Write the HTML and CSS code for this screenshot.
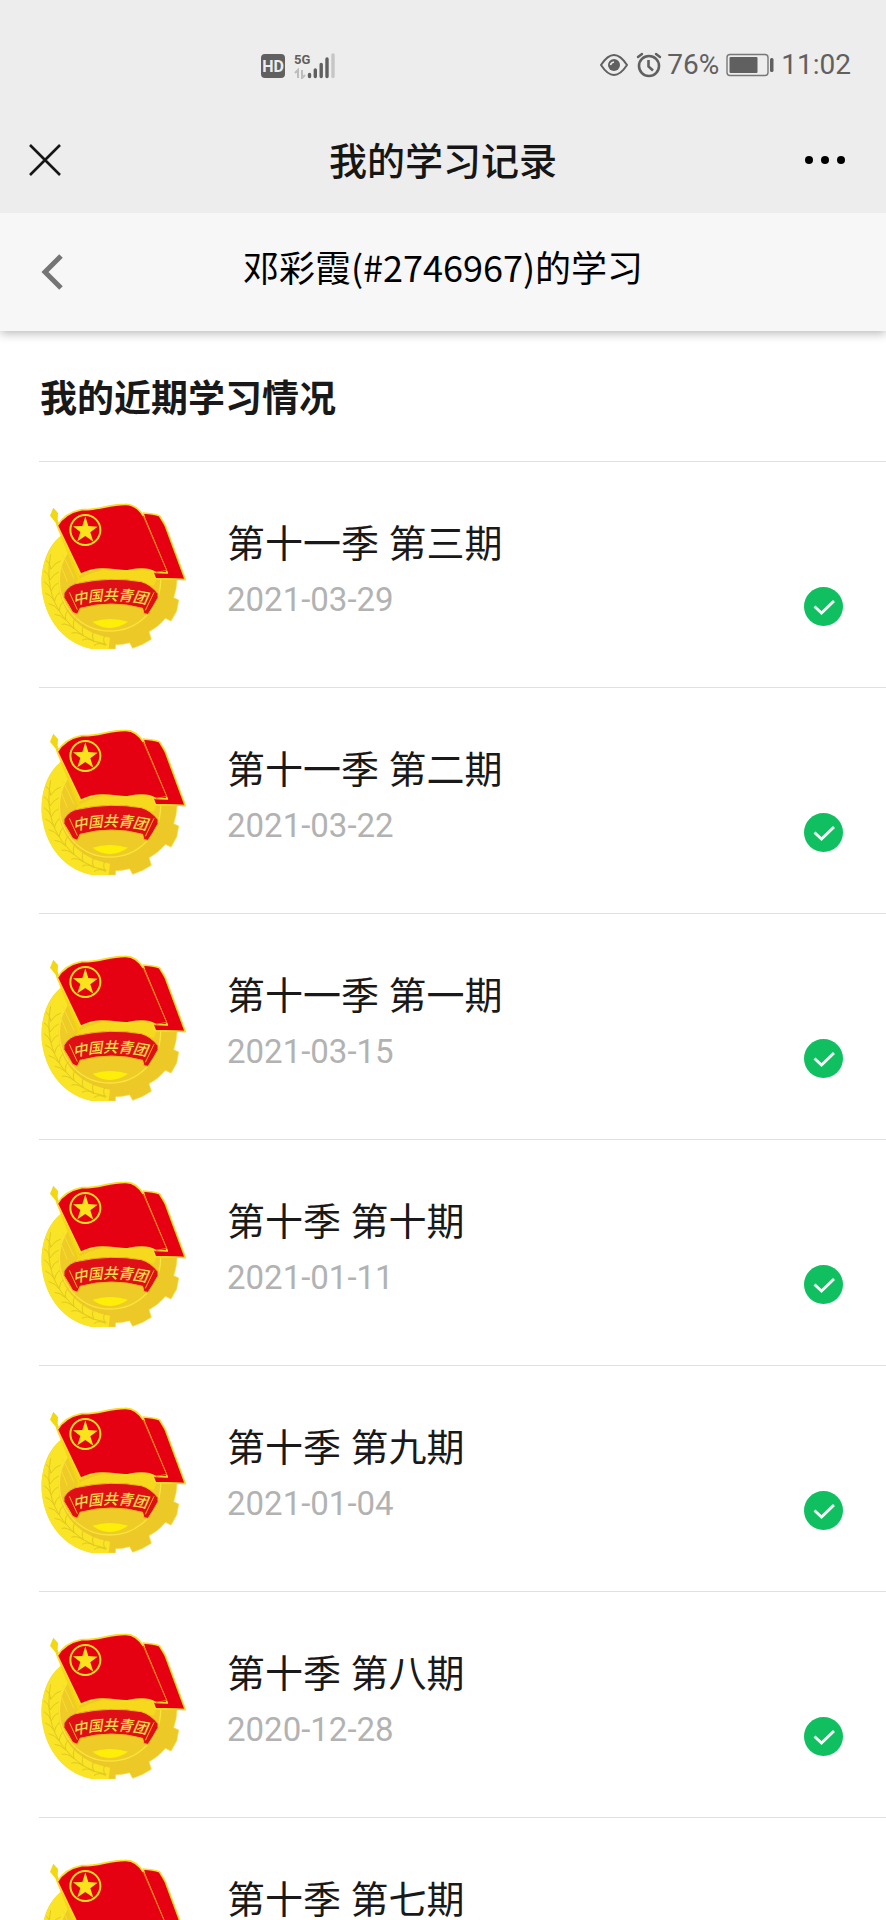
FILE: index.html
```html
<!DOCTYPE html>
<html lang="zh-CN">
<head>
<meta charset="utf-8">
<meta name="viewport" content="width=device-width, initial-scale=1">
<title>我的学习记录</title>
<link rel="stylesheet" href="styles.css">
</head>
<body>
<svg class="sprite" aria-hidden="true">
  <symbol id="emblem" viewBox="30 30 444 444">
    <!-- gear and outer ring -->
    <path fill="#ecc926" stroke="#f5dc3c" stroke-width="2" d="M230 92C340 80 440 170 441 265Q440 295 431 320L446 327 440 360 423 390 406 382Q385 408 357 422L364 445 338 460 308 472 299 455Q278 461 257 461L256 474H190C90 455 40 370 36 280C34 220 55 160 100 130Z"/>
    <path fill="#f9e426" d="M100 128C50 165 28 240 36 300C48 390 105 460 190 474H236L240 440C150 425 88 360 86 275C86 230 100 195 125 170Z"/>
    <circle cx="240" cy="268" r="152" fill="#eecb26" stroke="#f9e43c" stroke-width="4"/>
    <path fill="none" stroke="#f7df2c" stroke-width="3" d="M98 190 132 262M110 170 150 254M124 168 158 250M92 222 112 272"/>
    <path fill="#f6d91c" d="M150 262Q240 215 362 240L378 268 372 284Q250 250 138 276Z"/>
    <!-- wheat ears -->
    <g fill="none" stroke="#e3c822" stroke-width="3">
      <path d="M62 190Q42 300 98 375T230 460"/>
      <path d="M48 208Q60 215 62 235Q74 215 92 210M42 240Q56 247 60 267Q72 248 86 243M42 272Q56 279 64 299Q72 280 85 276M46 306Q60 310 74 330Q78 310 90 305M56 338Q72 340 88 360Q90 338 100 333M74 370Q90 370 107 387Q104 364 116 357M95 400Q112 396 132 413Q126 390 138 380M124 427Q140 420 160 435Q152 412 164 402M156 448Q172 438 192 452Q182 430 194 419M192 464Q206 452 226 463Q216 443 226 432"/>
    </g>
    <path fill="#ffee08" d="M188 392Q240 376 294 392Q270 410 240 411Q207 410 188 392Z"/>
    <!-- rear flag, pole and front flag -->
    <path fill="#e50012" stroke="#f9dc27" stroke-width="5" stroke-linejoin="round" d="M340 66Q370 68 388 74L405 102 466 266 438 264 376 263 362 226Z"/>
    <path fill="#f4d80e" d="M60 74 70 50 84 66 83 86 154 272 146 272 76 94Z"/>
    <path fill="#e50012" stroke="#f9dc27" stroke-width="5" stroke-linejoin="round" d="M82 104Q105 66 155 56C205 58 235 40 285 40Q320 39 342 78L412 246 376 244Q350 228 300 238C270 248 220 216 152 250Z"/>
    <path fill="none" stroke="#e50012" stroke-width="7" d="M338 76 406 240"/>
    <path fill="none" stroke="#ef6b22" stroke-width="3" d="M340 76 410 238 378 244"/>
    <circle cx="166" cy="117" r="45" fill="none" stroke="#fae31c" stroke-width="6"/>
    <path fill="#fae31c" d="M166 76 175 105 203 107 181 124 190 152 166 135 142 151 151 123 129 106 157 105Z"/>
    <!-- ribbon -->
    <path fill="#df0f18" stroke="#f4b51b" stroke-width="3" d="M102 306Q120 278 148 276Q240 256 334 272Q362 280 384 308L384 320Q370 346 354 370L342 368 338 352Q245 326 150 352L142 370 128 364Q112 335 102 320Z"/>
    <path fill="none" stroke="#f4b51b" stroke-width="3" d="M118 304 142 356M372 304 346 358"/>
    <path id="ribbon-line" fill="none" d="M132 342Q245 314 365 343"/>
    <text class="ribbon-text"><textPath href="#ribbon-line">中国共青团</textPath></text>
  </symbol>
  <symbol id="check" viewBox="0 0 39 39">
    <circle cx="19.5" cy="19.5" r="19.5" fill="#10bf60"/>
    <path fill="none" stroke="#fff" stroke-width="2.8" d="M10.5 19.5 17.5 26 30 14"/>
  </symbol>
</svg>

<header class="top">
  <div class="status">
    <div class="status-left">
      <svg width="25" height="25" viewBox="0 0 25 25" role="img" aria-label="HD">
        <rect width="24" height="24" y="1" rx="4" fill="#606060"/>
        <text class="hd" x="12" y="19" text-anchor="middle">HD</text>
      </svg>
      <svg width="42" height="27" viewBox="0 0 42 27" role="img" aria-label="5G">
        <text class="net" x="0" y="12">5G</text>
        <path fill="none" stroke="#bdbdbd" stroke-width="2" d="M4 26V18L1 21M8 18V26L11 23"/>
        <path fill="none" stroke="#606060" stroke-width="3.4" stroke-linecap="round" d="M15.500 22.500V24.500M21.300 18V24.500M27.200 12.500V24.500M33 7V24.500"/>
        <path fill="none" stroke="#c6c6c6" stroke-width="3.400" stroke-linecap="round" d="M39 3V24.500"/>
      </svg>
    </div>
    <div class="status-right">
      <svg width="28" height="24" viewBox="0 0 28 24" fill="none" stroke="#606060" aria-hidden="true">
        <path stroke-width="2" d="M1 12Q14-8 27 12Q14 32 1 12Z"/>
        <circle cx="14" cy="12" r="6" fill="#606060" stroke="none"/>
        <path stroke="#ededed" stroke-width="1.500" d="M10.500 12Q11 9.500 14 9"/>
      </svg>
      <svg class="alarm" width="26" height="26" viewBox="0 0 26 26" fill="none" stroke="#606060" aria-hidden="true">
        <circle cx="13" cy="14" r="10" stroke-width="2.600"/>
        <path stroke-width="2.400" stroke-linecap="round" d="M2 5 6 2M24 5 20 2"/>
        <path stroke-width="2.600" d="M12.500 8V14.500L17 18.500"/>
      </svg>
      <span class="pct">76%</span>
      <svg class="battery" width="48" height="24" viewBox="0 0 48 24" aria-hidden="true">
        <rect x="1" y="1.500" width="41" height="21" rx="3" fill="none" stroke="#777" stroke-width="1.400"/>
        <rect x="3.500" y="4" width="28" height="16" rx="1" fill="#606060"/>
        <rect x="44" y="5" width="3.500" height="14" rx="1.500" fill="#606060"/>
      </svg>
      <time>11:02</time>
    </div>
  </div>
  <div class="nav">
    <button class="icon-btn" type="button" aria-label="关闭">
      <svg width="32" height="32" viewBox="0 0 32 32"><path fill="none" stroke="#161616" stroke-width="2.600" d="M1 1 31 31M31 1 1 31"/></svg>
    </button>
    <h1>我的学习记录</h1>
    <button class="icon-btn more" type="button" aria-label="更多">
      <svg width="42" height="10" viewBox="0 0 42 10" fill="#000"><circle cx="5" cy="5" r="4"/><circle cx="21" cy="5" r="4"/><circle cx="37" cy="5" r="4"/></svg>
    </button>
  </div>
</header>

<div class="subhead">
  <button class="icon-btn" type="button" aria-label="返回">
    <svg width="22" height="36" viewBox="0 0 22 36"><path fill="none" stroke="#757575" stroke-width="5" d="M20 2 4 18 20 34"/></svg>
  </button>
  <h2>邓彩霞(#2746967)的学习</h2>
</div>

<main>
  <h3>我的近期学习情况</h3>
  <ul class="list">
    <li class="row"><svg class="emblem" aria-hidden="true"><use href="#emblem"/></svg><div class="body"><div class="title">第十一季 第三期</div><div class="meta"><time>2021-03-29</time><svg class="check" role="img" aria-label="已完成"><use href="#check"/></svg></div></div></li>
    <li class="row"><svg class="emblem" aria-hidden="true"><use href="#emblem"/></svg><div class="body"><div class="title">第十一季 第二期</div><div class="meta"><time>2021-03-22</time><svg class="check" role="img" aria-label="已完成"><use href="#check"/></svg></div></div></li>
    <li class="row"><svg class="emblem" aria-hidden="true"><use href="#emblem"/></svg><div class="body"><div class="title">第十一季 第一期</div><div class="meta"><time>2021-03-15</time><svg class="check" role="img" aria-label="已完成"><use href="#check"/></svg></div></div></li>
    <li class="row"><svg class="emblem" aria-hidden="true"><use href="#emblem"/></svg><div class="body"><div class="title">第十季 第十期</div><div class="meta"><time>2021-01-11</time><svg class="check" role="img" aria-label="已完成"><use href="#check"/></svg></div></div></li>
    <li class="row"><svg class="emblem" aria-hidden="true"><use href="#emblem"/></svg><div class="body"><div class="title">第十季 第九期</div><div class="meta"><time>2021-01-04</time><svg class="check" role="img" aria-label="已完成"><use href="#check"/></svg></div></div></li>
    <li class="row"><svg class="emblem" aria-hidden="true"><use href="#emblem"/></svg><div class="body"><div class="title">第十季 第八期</div><div class="meta"><time>2020-12-28</time><svg class="check" role="img" aria-label="已完成"><use href="#check"/></svg></div></div></li>
    <li class="row"><svg class="emblem" aria-hidden="true"><use href="#emblem"/></svg><div class="body"><div class="title">第十季 第七期</div></div></li>
  </ul>
</main>
</body>
</html>
```
FILE: styles.css
```css
* {
  box-sizing: border-box;
}

html {
  height: 100%;
  overflow: hidden;
}

body {
  margin: 0;
  height: 100%;
  overflow: hidden;
  background: #fff;
  color: #191919;
  font-family: Roboto, "Noto Sans CJK SC", sans-serif;
}

h1, h2, h3, ul {
  margin: 0;
  padding: 0;
}

svg {
  display: block;
  flex: none;
}

.sprite {
  display: none;
}

.ribbon-text {
  font: italic 500 44px "Noto Sans CJK SC", sans-serif;
  fill: #fbe04a;
}

.top {
  position: relative;
  z-index: 1;
  background: #ededed;
}

.status {
  display: flex;
  justify-content: space-between;
  align-items: center;
  height: 106px;
  padding: 45px 35px 21px 261px;
  color: #606060;
  font-size: 28px;
  line-height: 40px;
}

.status-left,
.status-right {
  display: flex;
  align-items: center;
}

.status-left {
  gap: 8px;
}

.alarm {
  margin-left: 8px;
}

.pct {
  margin: 0 7px 0 5px;
}

.battery {
  margin-right: 7px;
}

.hd {
  font: 700 16px Roboto, sans-serif;
  fill: #ededed;
}

.net {
  font: 700 13px Roboto, sans-serif;
  fill: #606060;
}

.nav {
  display: grid;
  grid-template-columns: 1fr auto 1fr;
  align-items: center;
  height: 107px;
  padding: 0 29px;
}

.nav h1 {
  padding-top: 4px;
  color: #161616;
  font-size: 38px;
  font-weight: 500;
  line-height: 56px;
}

.icon-btn {
  justify-self: start;
  padding: 0;
  border: 0;
  background: none;
}

.more {
  justify-self: end;
  padding-right: 11px;
}

.subhead {
  display: grid;
  grid-template-columns: 1fr auto 1fr;
  align-items: center;
  height: 118px;
  padding: 0 41px;
  background: #f7f7f7;
  box-shadow: 0 2px 10px rgba(0, 0, 0, 0.3);
}

.subhead h2 {
  padding-bottom: 12px;
  color: #000;
  font-family: "Noto Sans CJK SC", sans-serif;
  font-size: 36px;
  font-weight: 400;
  line-height: 52px;
}

main h3 {
  padding: 41px 40px 34px;
  font-size: 37px;
  font-weight: 700;
  line-height: 55px;
}

.list {
  list-style: none;
  padding-left: 39px;
}

.row {
  display: flex;
  gap: 39px;
  padding: 39px 43px 38px 1px;
  border-top: 1px solid #e0e0e0;
}

.emblem {
  width: 148px;
  height: 148px;
}

.body {
  flex: 1;
  padding-top: 16px;
}

.title {
  font-size: 38px;
  line-height: 54px;
}

.meta {
  display: flex;
  justify-content: space-between;
  align-items: flex-end;
  margin-top: 6px;
}

.meta time {
  padding-bottom: 3px;
  color: #b2b2b2;
  font-size: 33px;
  line-height: 46px;
}

.check {
  width: 39px;
  height: 39px;
}
```
